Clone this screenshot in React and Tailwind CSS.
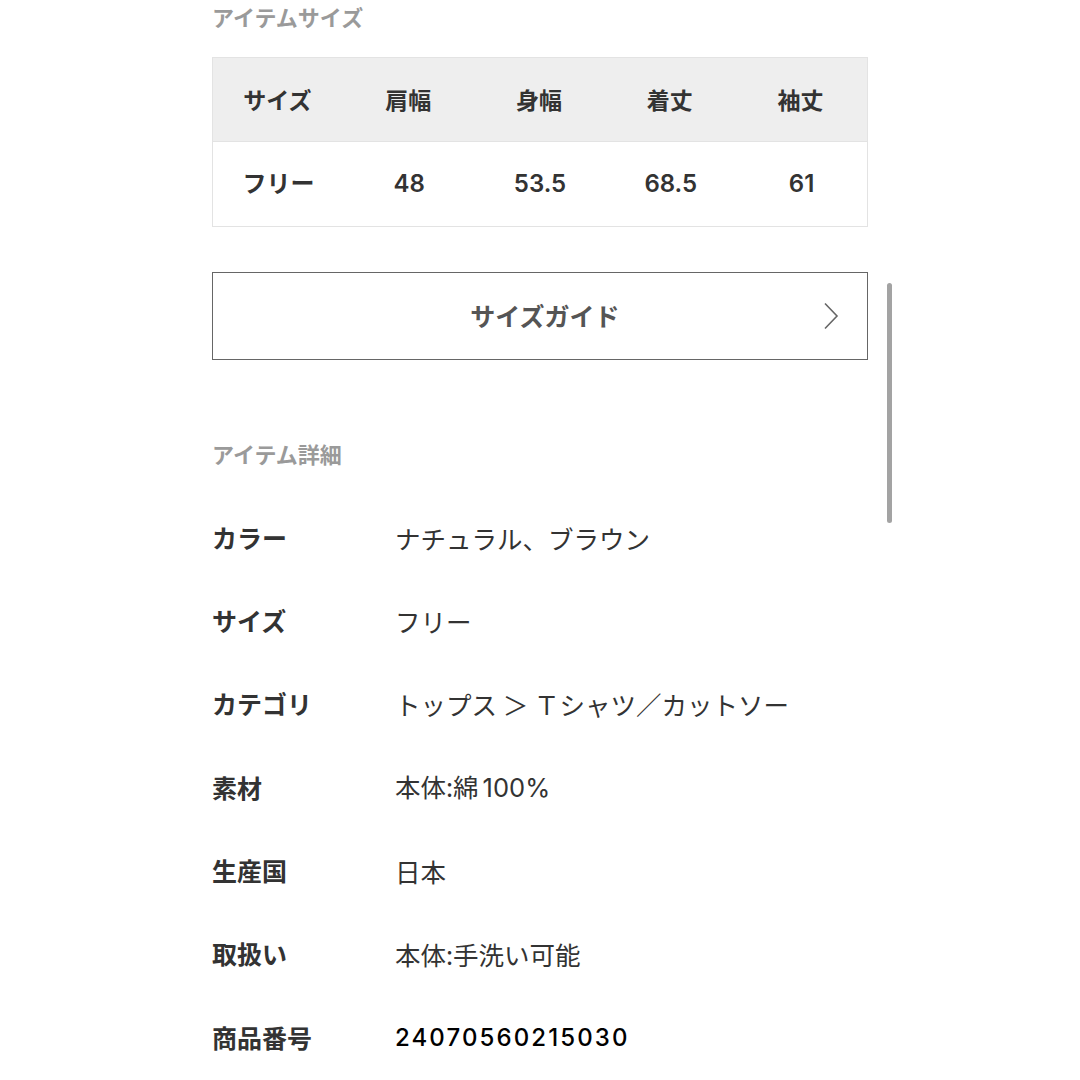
import React from "react";

const font = { fontFamily: '"Noto Sans CJK JP", "Noto Sans", sans-serif' };
const latin = { fontFamily: 'Inter, "Noto Sans CJK JP", sans-serif' };

const sizeHead = ["サイズ", "肩幅", "身幅", "着丈", "袖丈"];
const sizeBody = ["フリー", "48", "53.5", "68.5", "61"];

const details = [
  ["カラー", "ナチュラル、ブラウン"],
  ["サイズ", "フリー"],
  ["カテゴリ", "トップス ＞ Ｔシャツ／カットソー"],
  ["素材", <>本体:綿<span style={latin} className="ml-[4px]">100%</span></>],
  ["生産国", "日本"],
  ["取扱い", "本体:手洗い可能"],
];

export default function App() {
  return (
    <div className="relative w-[1080px] h-[1080px] overflow-hidden bg-white" style={font}>
      <div className="ml-[212px] w-[656px] flex flex-col">
        <div className="text-[22px] leading-[32px] font-bold text-[#9a9a9a]">アイテムサイズ</div>

        <div className="mt-[25px] border border-[#e3e3e3]">
          <div className="grid grid-cols-5 h-[84px] bg-[#eeeeee] border-b border-[#e3e3e3] items-center">
            {sizeHead.map((h) => (
              <div key={h} className="text-center text-[23px] font-bold text-[#333333] translate-x-[-1px]">{h}</div>
            ))}
          </div>
          <div className="grid grid-cols-5 h-[84px] items-center">
            {sizeBody.map((h) => (
              <div key={h} style={latin} className="text-center text-[24px] font-semibold text-[#333333]">{h}</div>
            ))}
          </div>
        </div>

        <div className="mt-[45px] h-[88px] border-[1.5px] border-[#666666] flex items-center justify-center relative">
          <span className="text-[25px] font-bold text-[#555555] ml-[10px]">サイズガイド</span>
          <svg className="absolute right-[28px] top-1/2 -translate-y-1/2" width="16" height="28" viewBox="0 0 16 28" fill="none">
            <path d="M2 1.5 L14 14 L2 26.5" stroke="#666666" strokeWidth="1.6" />
          </svg>
        </div>

        <div className="mt-[77px] text-[22px] leading-[32px] font-bold text-[#9a9a9a]">アイテム詳細</div>

        <div className="mt-[27px] flex flex-col">
          {details.map(([k, v]) => (
            <div key={k} className="h-[83.3px] flex items-center">
              <div className="w-[183px] text-[25px] font-bold text-[#333333]">{k}</div>
              <div className="text-[25.5px] text-[#333333]">{v}</div>
            </div>
          ))}
          <div className="h-[83.3px] flex items-center">
            <div className="w-[183px] text-[25px] font-bold text-[#333333]">商品番号</div>
            <div className="text-[24px] text-black">
              <span style={latin} className="font-medium tracking-[2.1px]">24070560215030</span>
            </div>
          </div>
        </div>
      </div>

      <div className="absolute left-[887px] top-[283px] w-[5px] h-[240px] rounded-full bg-[#a3a3a3]" />
    </div>
  );
}
